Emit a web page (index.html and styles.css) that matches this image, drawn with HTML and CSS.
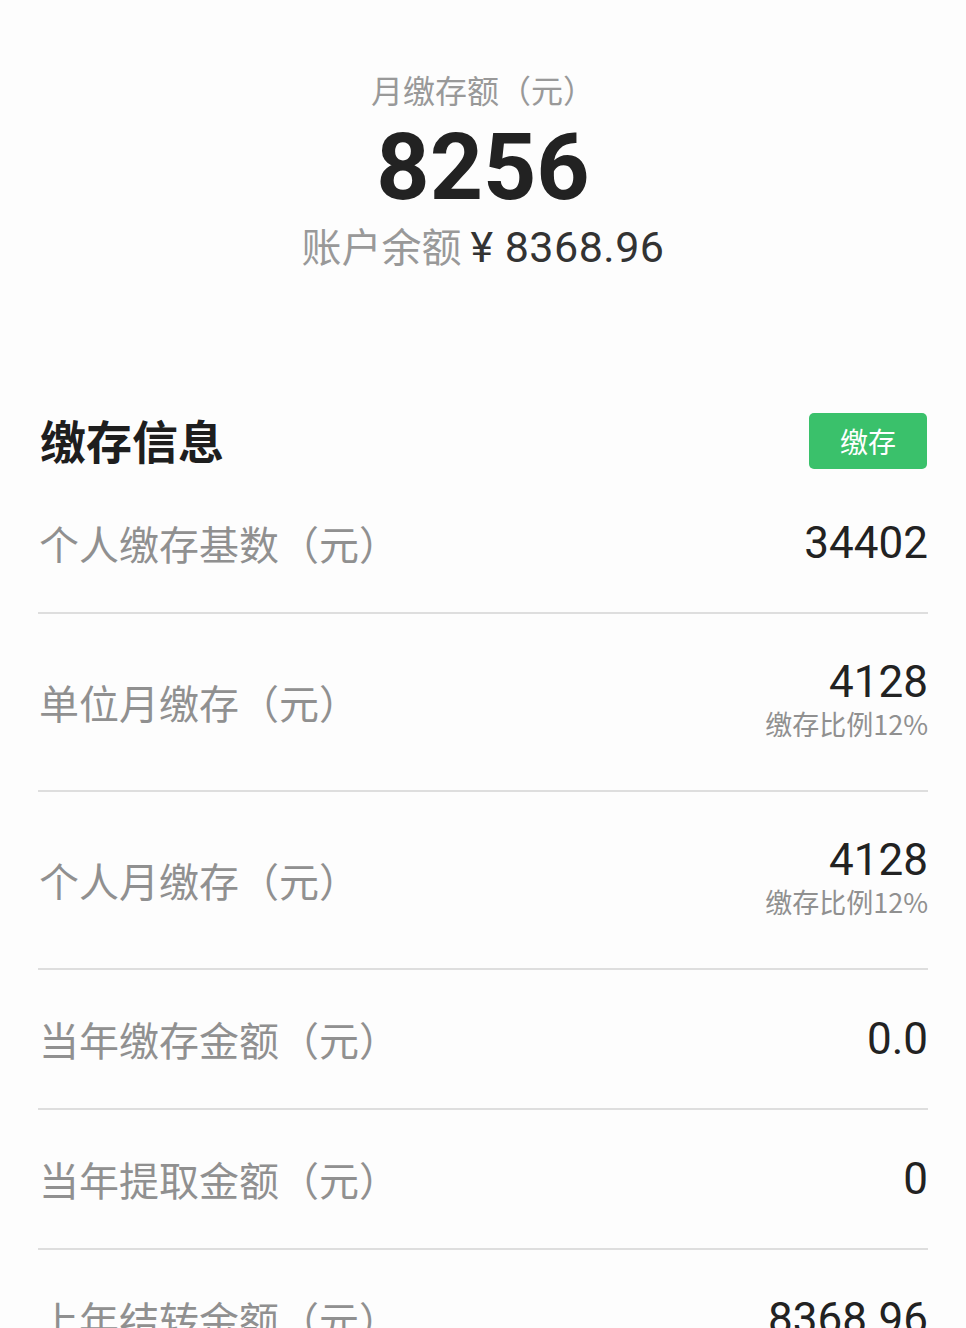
FILE: index.html
```html
<!DOCTYPE html>
<html lang="zh-CN">
<head>
<meta charset="utf-8">
<title>缴存信息</title>
<link rel="stylesheet" href="styles.css">
</head>
<body>
<div class="page">
  <section class="summary">
    <div class="summary-title">月缴存额（元）</div>
    <div class="summary-amount">8256</div>
    <div class="summary-balance"><span class="balance-label">账户余额</span> <span class="balance-value">¥ 8368.96</span></div>
  </section>

  <section class="info">
    <div class="info-header">
      <h2 class="info-title">缴存信息</h2>
      <button class="pay-btn">缴存</button>
    </div>
    <div class="row row-first">
      <div class="row-label">个人缴存基数（元）</div>
      <div class="row-value"><div class="value">34402</div></div>
    </div>
    <div class="row row-tall">
      <div class="row-label">单位月缴存（元）</div>
      <div class="row-value"><div class="value">4128</div><div class="sub">缴存比例12%</div></div>
    </div>
    <div class="row row-tall">
      <div class="row-label">个人月缴存（元）</div>
      <div class="row-value"><div class="value">4128</div><div class="sub">缴存比例12%</div></div>
    </div>
    <div class="row">
      <div class="row-label">当年缴存金额（元）</div>
      <div class="row-value"><div class="value">0.0</div></div>
    </div>
    <div class="row">
      <div class="row-label">当年提取金额（元）</div>
      <div class="row-value"><div class="value">0</div></div>
    </div>
    <div class="row">
      <div class="row-label">上年结转金额（元）</div>
      <div class="row-value"><div class="value">8368.96</div></div>
    </div>
  </section>
</div>
</body>
</html>
```
FILE: styles.css
```css
html, body {
  margin: 0;
  padding: 0;
  background: #fdfdfd;
}
body {
  font-family: "Noto Sans CJK SC", "Noto Sans", sans-serif;
  color: #222;
  overflow: hidden;
}
.page {
  width: 966px;
  height: 1328px;
  overflow: hidden;
}
.summary {
  padding-top: 66px;
  text-align: center;
}
.summary-title {
  font-size: 32px;
  line-height: 46px;
  color: #999;
}
.summary-amount {
  font-family: "Roboto", "Noto Sans", sans-serif;
  font-weight: 700;
  font-size: 93px;
  line-height: 104px;
  color: #222;
  margin-top: 4px;
}
.summary-balance {
  font-size: 40px;
  line-height: 54px;
  margin-top: -2px;
}
.balance-label {
  color: #999;
}
.balance-value {
  font-family: "Roboto", "Noto Sans", sans-serif;
  color: #333;
  font-size: 43px;
  letter-spacing: 0.5px;
}
.info {
  padding: 0 38px;
  margin-top: 138px;
}
.info-header {
  display: flex;
  justify-content: space-between;
  align-items: center;
  height: 58px;
}
.info-title {
  margin: 0;
  font-size: 46px;
  line-height: 58px;
  font-weight: 700;
  color: #1e1e1e;
  padding-left: 2px;
  position: relative;
  top: -2px;
}
.pay-btn {
  width: 118px;
  height: 56px;
  border: none;
  border-radius: 5px;
  background: #3ac16b;
  color: #fff;
  font-family: "Noto Sans CJK SC", sans-serif;
  font-size: 28px;
  padding: 0;
  margin-right: 1px;
}
.row {
  display: flex;
  justify-content: space-between;
  align-items: center;
  padding: 41px 0;
  border-bottom: 2px solid #dedede;
}
.row-first {
  padding-top: 45px;
}
.row-tall {
  padding: 46px 0;
}
.row-label {
  font-size: 40px;
  line-height: 56px;
  color: #909090;
  padding-left: 1px;
}
.row-value {
  text-align: right;
}
.value {
  font-family: "Roboto", "Noto Sans", sans-serif;
  font-size: 44px;
  line-height: 44px;
  color: #222;
  padding: 6px 0;
}
.row-tall .value {
  padding: 0;
}
.sub {
  font-size: 27px;
  line-height: 40px;
  color: #909090;
}
```
